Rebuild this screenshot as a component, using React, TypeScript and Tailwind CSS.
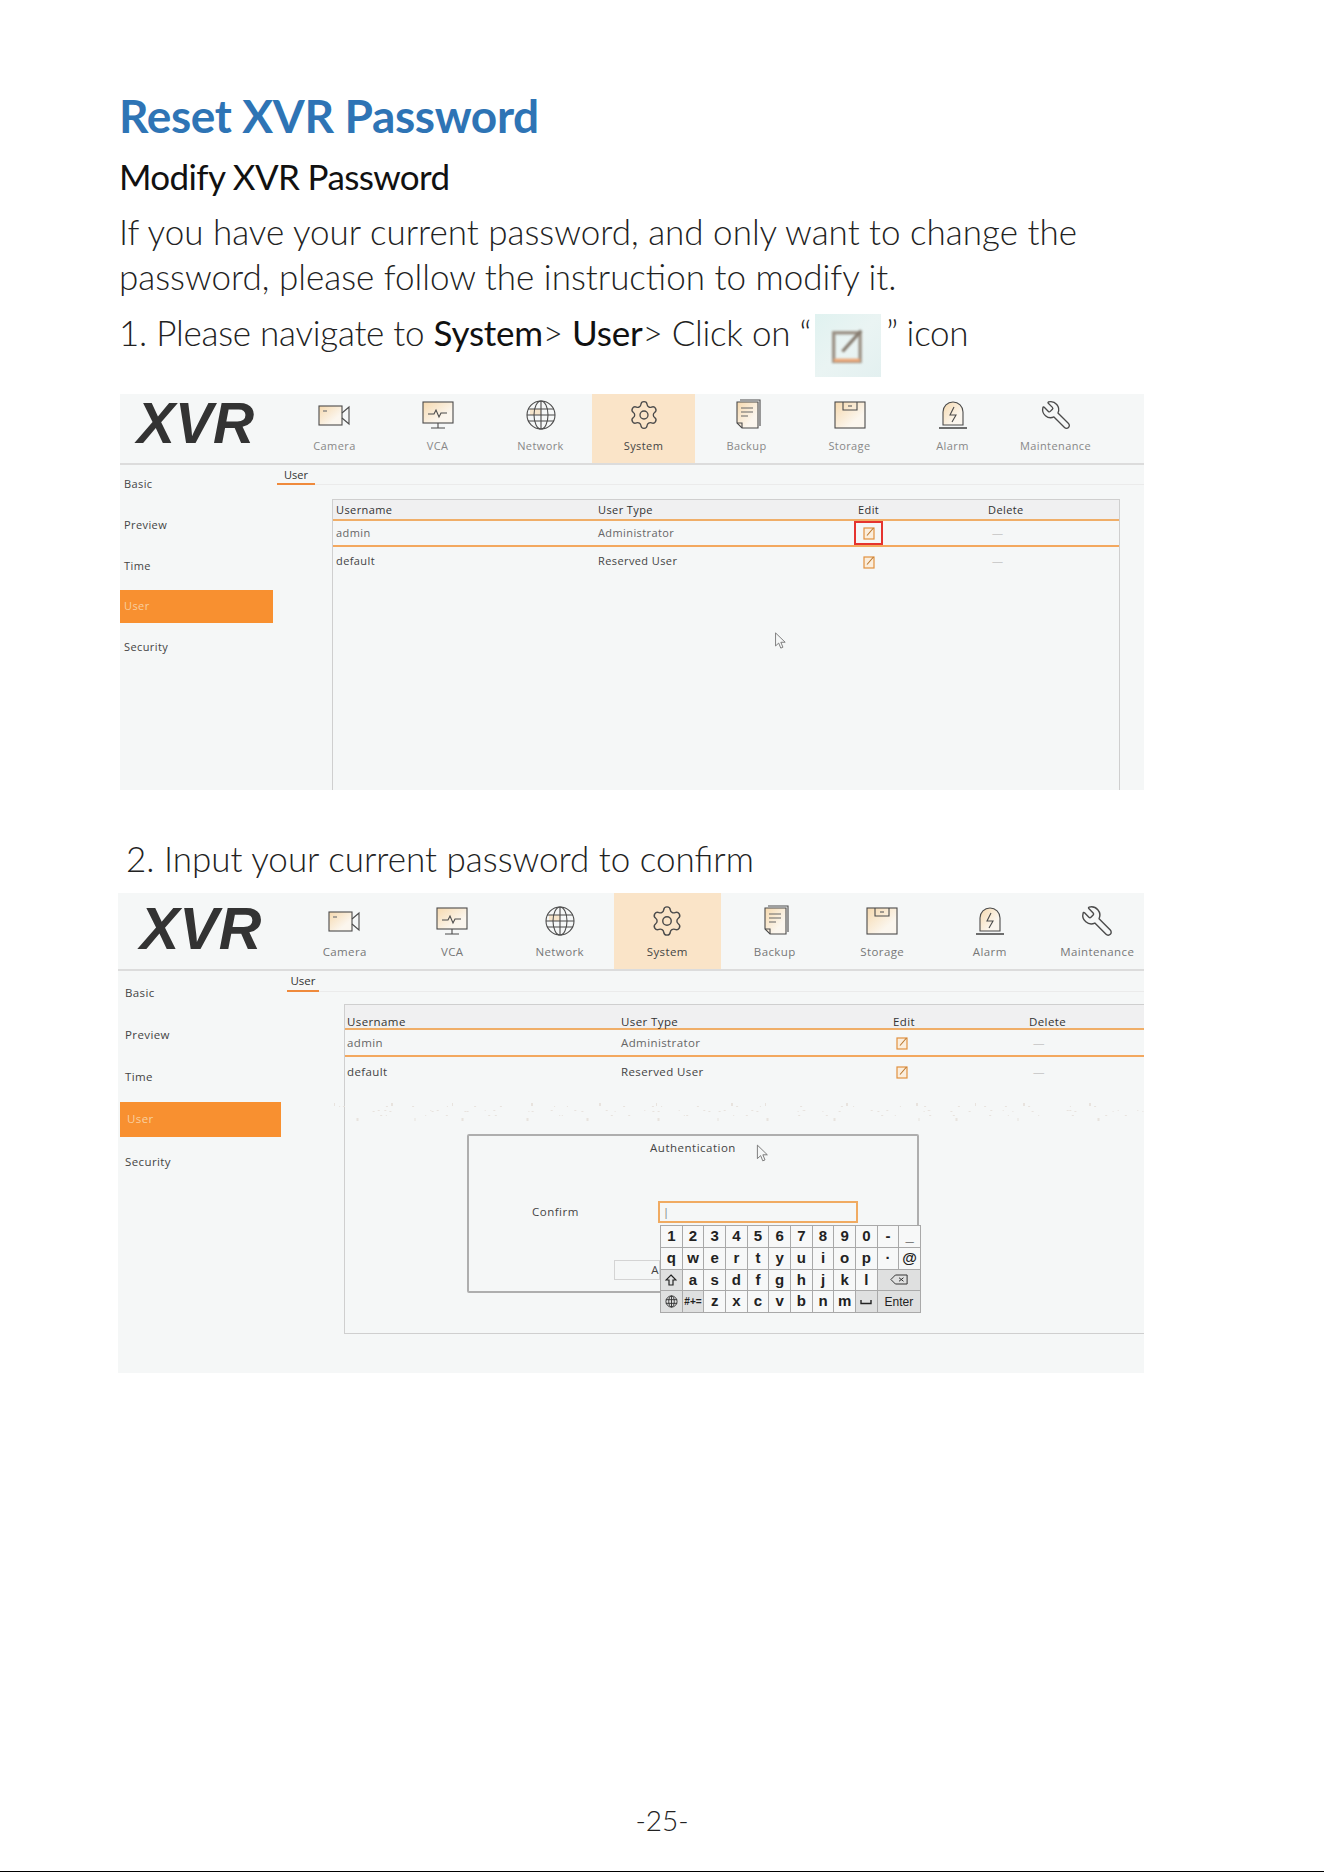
import React from "react";
import { Settings, Wrench } from "lucide-react";

const Grad = () => (
  <svg width="0" height="0" className="absolute">
    <defs>
      <linearGradient id="cream" x1="0" y1="0" x2="1" y2="1">
        <stop offset="0" stopColor="#f6d9ae" />
        <stop offset="0.7" stopColor="#fbf6ee" />
      </linearGradient>
    </defs>
  </svg>
);

const S = { fill: "none", stroke: "#4b4b4b", strokeWidth: 1.1 };

const IconCamera = ({ c }: { c: string }) => (
  <svg viewBox="0 0 36 32" className={c}>
    <rect x="2" y="7" width="23" height="19" fill="url(#cream)" stroke="#4b4b4b" strokeWidth="1.1" />
    <path d="M25 14l7-6v17l-7-6" {...S} />
    <path d="M6 12h4" stroke="#777" strokeWidth="1.2" />
  </svg>
);
const IconVca = ({ c }: { c: string }) => (
  <svg viewBox="0 0 36 32" className={c}>
    <rect x="3" y="3" width="30" height="21" fill="url(#cream)" stroke="#4b4b4b" strokeWidth="1.1" />
    <path d="M8 15h6l2-4 3 7 2-4h6" {...S} />
    <path d="M18 24v5M11 29h14" {...S} />
  </svg>
);
const IconGlobe = ({ c }: { c: string }) => (
  <svg viewBox="0 0 36 32" className={c}>
    <rect x="7" y="10" width="11" height="6" fill="#f6d9ae" opacity="0.6" />
    <circle cx="18" cy="16" r="14" {...S} />
    <ellipse cx="18" cy="16" rx="7" ry="14" {...S} />
    <path d="M18 2v28M5 10h26M5 22h26M4 16h28" {...S} />
  </svg>
);
const IconBackup = ({ c }: { c: string }) => (
  <svg viewBox="0 0 36 32" className={c}>
    <path d="M11 1h20v26" {...S} />
    <path d="M8 3h21v26H13l-5-5z" fill="url(#cream)" stroke="#4b4b4b" strokeWidth="1.1" />
    <path d="M8 24h5v5" {...S} />
    <path d="M12 9h12M12 13h12M12 17h7" stroke="#666" strokeWidth="1.1" />
  </svg>
);
const IconStorage = ({ c }: { c: string }) => (
  <svg viewBox="0 0 36 32" className={c}>
    <rect x="3" y="3" width="30" height="26" fill="url(#cream)" stroke="#4b4b4b" strokeWidth="1.1" />
    <path d="M11 3v8h14V3" {...S} />
    <path d="M16 7h4" stroke="#666" strokeWidth="1.2" />
  </svg>
);
const IconAlarm = ({ c }: { c: string }) => (
  <svg viewBox="0 0 36 32" className={c}>
    <path d="M8 26V13a10 10 0 0 1 20 0v13z" fill="url(#cream)" stroke="#4b4b4b" strokeWidth="1.1" />
    <path d="M19 8l-4 8h6l-4 7" {...S} />
    <path d="M4 29h28" stroke="#4b4b4b" strokeWidth="1.6" />
  </svg>
);
const IconEdit = ({ c }: { c: string }) => (
  <svg viewBox="0 0 14 14" className={c}>
    <rect x="2" y="2" width="10" height="11" fill="#fbeedd" stroke="#e2913f" strokeWidth="1.2" />
    <path d="M5 9.5L11.5 2" stroke="#b9772f" strokeWidth="1.1" />
  </svg>
);
const Pointer = ({ c }: { c: string }) => (
  <svg viewBox="0 0 14 20" className={c}>
    <path d="M1.5 1v14.5l3.5-3.2 2.3 5.6 2.4-1-2.3-5.5h4.8z" fill="#f5f7f7" stroke="#666" strokeWidth="0.9" />
  </svg>
);

const speckles: [number, number][] = Array.from({ length: 130 }, (_, i) => [
  (i * 37.3 + ((i * i * 13) % 29)) % 810,
  (i * i * 7) % 20,
]);

const Speckle = () => (
  <svg viewBox="0 0 810 22" className="absolute left-[216px] top-[210px] w-[810px] h-[22px]">
    {speckles.map(([x, y], i) => (
      <rect key={i} x={x} y={y} width={i % 3 === 0 ? 1 : 2} height={i % 5 === 0 ? 3 : 1} fill="#e8e3de" />
    ))}
  </svg>
);

const tabs: [string, (p: { c: string }) => React.ReactElement][] = [
  ["Camera", IconCamera],
  ["VCA", IconVca],
  ["Network", IconGlobe],
  ["System", ({ c }) => <Settings className={c} strokeWidth={1} color="#4b4b4b" />],
  ["Backup", IconBackup],
  ["Storage", IconStorage],
  ["Alarm", IconAlarm],
  ["Maintenance", ({ c }) => <Wrench className={`${c} -scale-x-100`} strokeWidth={1} color="#4b4b4b" />],
];

const sideItems = ["Basic", "Preview", "Time", "User", "Security"];

const keys: [string, string][] = [
  ..."1234567890-_".split("").map((k) => [k, ""] as [string, string]),
  ..."qwertyuiop·@".split("").map((k) => [k, ""] as [string, string]),
];

const Key = ({ k, gray, wide, small }: { k: React.ReactNode; gray?: boolean; wide?: boolean; small?: boolean }) => (
  <div
    className={`flex items-center justify-center border-r border-b border-[#a9a9a9] ${wide ? "col-span-2" : ""} ${gray ? "bg-[#dfe0e0]" : "bg-[#f7f8f8]"} ${small ? "text-[10px] font-normal" : "text-[15px] font-bold"} text-[#222]`}
  >
    {k}
  </div>
);

const Keyboard = () => (
  <div className="absolute left-[542px] top-[332px] w-[261px] h-[88px] grid grid-cols-12 grid-rows-4 border-l border-t border-[#a9a9a9] font-['Liberation_Sans',sans-serif]">
    {keys.map(([k]) => (
      <Key key={k} k={k} />
    ))}
    <Key gray k={<svg viewBox="0 0 12 12" className="w-[12px] h-[12px]"><path d="M6 1l5 5H8v5H4V6H1z" fill="none" stroke="#222" strokeWidth="1.2" /></svg>} />
    {"asdfghjkl".split("").map((k) => (
      <Key key={k} k={k} />
    ))}
    <Key gray wide k={<svg viewBox="0 0 20 12" className="w-[18px] h-[11px]"><path d="M6 1h13v10H6L1 6z M10 4l5 4M15 4l-5 4" fill="none" stroke="#333" strokeWidth="1.1" /></svg>} />
    <Key gray k={<svg viewBox="0 0 14 14" className="w-[13px] h-[13px]"><circle cx="7" cy="7" r="6" fill="none" stroke="#333" /><ellipse cx="7" cy="7" rx="3" ry="6" fill="none" stroke="#333" /><path d="M1 5h12M1 9h12M7 1v12" stroke="#333" /></svg>} />
    <Key gray small k={<span className="font-bold">#+=</span>} />
    {"zxcvbnm".split("").map((k) => (
      <Key key={k} k={k} />
    ))}
    <Key gray k={<svg viewBox="0 0 12 6" className="w-[12px] h-[6px]"><path d="M1 1v3.5h10V1" fill="none" stroke="#222" strokeWidth="1.4" /></svg>} />
    <Key gray wide small k={<span className="text-[12px]">Enter</span>} />
  </div>
);

const Table = ({
  grid,
  head,
  row,
  row2,
  text,
  box,
  iconC,
  marker,
}: {
  grid: string;
  head: string;
  row: string;
  row2: string;
  text: string;
  box?: boolean;
  iconC: string;
  marker: string;
}) => (
  <>
    <div className={`${head} ${grid} items-center bg-[#f0f0f1] ${text} text-[#333] border-b-2 border-[#f0ae68]`}>
      <span>Username</span>
      <span>User Type</span>
      <span>Edit</span>
      <span>Delete</span>
    </div>
    <div className={`${row} ${grid} items-center ${text} text-[#666] border-b-2 border-[#f3a85f]`}>
      <span>admin</span>
      <span>Administrator</span>
      <span className={`${marker} h-full flex items-center justify-center ${box ? "border-2 border-[#e5342f]" : ""}`}>
        <IconEdit c={iconC} />
      </span>
      <span className="text-[#ccc] pl-[4px]">—</span>
    </div>
    <div className={`${row2} ${grid} items-center ${text} text-[#444]`}>
      <span>default</span>
      <span>Reserved User</span>
      <span className={`${marker} h-full flex items-center justify-center`}>
        <IconEdit c={iconC} />
      </span>
      <span className="text-[#ccc] pl-[4px]">—</span>
    </div>
  </>
);

const Shot1 = () => (
  <div className="relative ml-[120px] mt-[17px] w-[1024px] h-[396px] bg-[#f5f7f7] flex flex-col font-['Open_Sans',sans-serif]">
    <div className="h-[71px] flex border-b-2 border-[#dcdcdc] shrink-0">
      <div className="w-[163px] pl-[17px] pb-[10px] flex items-center font-['Liberation_Sans',sans-serif] font-bold italic text-[57px] leading-[59px] text-[#333]">
        XVR
      </div>
      {tabs.map(([name, Icon]) => (
        <div key={name} className={`w-[103px] shrink-0 h-[69px] flex flex-col items-center pt-[5px] ${name === "System" ? "bg-[#fae4c8] text-[#444]" : "text-[#888]"}`}>
          <Icon c="w-[36px] h-[32px]" />
          <span className="text-[11px] mt-[7px] leading-[16px] tracking-[0.4px]">{name}</span>
        </div>
      ))}
    </div>
    <div className="flex flex-1 min-h-0">
      <div className="w-[153px] pt-[3px] flex flex-col gap-[7.7px] text-[11px] tracking-[0.4px] text-[#444] shrink-0">
        {sideItems.map((s) => (
          <div key={s} className={`h-[33px] flex items-center pl-[4px] ${s === "User" ? "bg-[#f89030] text-[#f9cf9f]" : ""}`}>{s}</div>
        ))}
      </div>
      <div className="flex-1 pl-[4px] flex flex-col">
        <div className="h-[20px] border-b border-[#ebebeb]">
          <div className="w-[38px] h-[20px] border-b-2 border-[#ef8a3c] text-center text-[11px] leading-[20px] text-[#333]">User</div>
        </div>
        <div className="ml-[55px] mr-[24px] mt-[14px] flex-1 border-x border-t border-[#cfcfcf]">
          <Table
            grid="grid grid-cols-[262px_260px_130px_1fr] pl-[3px]"
            head="h-[21px] pt-[2px]"
            row="h-[26px]"
            row2="h-[29px]"
            text="text-[11px] tracking-[0.4px]"
            box
            iconC="w-[14px] h-[14px]"
            marker="w-[29px] -ml-[4px]"
          />
        </div>
      </div>
    </div>
    <Pointer c="absolute left-[654px] top-[238px] w-[13px] h-[18px]" />
  </div>
);

const Shot2 = () => (
  <div className="relative ml-[118px] mt-[16px] w-[1026px] h-[480px] bg-[#f5f7f7] flex flex-col font-['Open_Sans',sans-serif] overflow-hidden">
    <div className="h-[78px] flex border-b-2 border-[#dcdcdc] shrink-0">
      <div className="w-[173px] shrink-0 pl-[22px] pb-[4px] flex items-center font-['Liberation_Sans',sans-serif] font-bold italic text-[59px] leading-[61px] text-[#333]">
        XVR
      </div>
      {tabs.map(([name, Icon]) => (
        <div key={name} className={`w-[107.5px] shrink-0 h-[76px] flex flex-col items-center pt-[11px] ${name === "System" ? "bg-[#fae4c8] text-[#444]" : "text-[#777]"}`}>
          <Icon c="w-[36px] h-[34px]" />
          <span className="text-[11.5px] mt-[6px] leading-[16px] tracking-[0.4px]">{name}</span>
        </div>
      ))}
    </div>
    <div className="flex flex-1">
      <div className="w-[163px] pt-[4px] flex flex-col gap-[7.2px] text-[11.5px] tracking-[0.4px] text-[#444] shrink-0">
        {sideItems.map((s) => (
          <div key={s} className={`h-[35px] flex items-center pl-[7px] ${s === "User" ? "bg-[#f89030] ml-[2px] pl-[5px] text-[#f9cf9f]" : ""}`}>{s}</div>
        ))}
      </div>
      <div className="flex-1 pl-[6px] flex flex-col">
        <div className="h-[21px] border-b border-[#ebebeb]">
          <div className="w-[32px] h-[21px] border-b-2 border-[#ef8a3c] text-center text-[11.5px] leading-[20px] text-[#333]">User</div>
        </div>
        <div className="ml-[57px] mt-[12px] h-[330px] border-l border-t border-b border-[#cfcfcf]">
          <Table
            grid="grid grid-cols-[274px_272px_136px_1fr] pl-[2px]"
            head="h-[25px] pt-[8px]"
            row="h-[27px]"
            row2="h-[29px]"
            text="text-[11.5px] tracking-[0.4px]"
            iconC="w-[14px] h-[14px]"
            marker="w-[18px]"
          />
        </div>
      </div>
    </div>
    <Speckle />
    <div className="absolute left-[349px] top-[241px] w-[452px] h-[159px] border-2 border-[#aeaeae] rounded-[2px] bg-[#f5f7f7] flex flex-col text-[#444] text-[11.5px] tracking-[0.5px]">
      <div className="text-center pt-[3px] leading-[18px]">Authentication</div>
      <div className="flex items-center mt-[44px] pl-[63px]">
        <span className="w-[126px]">Confirm</span>
        <div className="w-[200px] h-[22px] border-2 border-[#f0ab62] flex items-center pl-[3px] text-[#777] text-[11px]">|</div>
      </div>
      <div className="mt-[37px] ml-[145px] w-[46px] h-[20px] border border-[#d4d4d4] text-[11.5px] leading-[18px] text-right">A</div>
    </div>
    <Keyboard />
    <Pointer c="absolute left-[638px] top-[251px] w-[13px] h-[19px]" />
  </div>
);

export default function App() {
  return (
    <div className="w-[1324px] h-[1872px] bg-white flex flex-col font-['Lato',sans-serif] text-[#222] overflow-hidden">
      <Grad />
      <div className="pt-[92px] pl-[119px]">
        <h1 className="text-[46px] leading-[48px] font-bold text-[#2e74b5] tracking-[-0.35px]">Reset XVR Password</h1>
        <h2 className="mt-[16px] text-[35px] leading-[40px] font-normal tracking-[-0.63px] text-[#111]">Modify XVR Password</h2>
        <p className="mt-[13px] text-[35px] leading-[45px] font-light whitespace-nowrap">
          If you have your current password, and only want to change the
          <br />
          password, please follow the instruction to modify it.
        </p>
        <div className="mt-[14px] h-[64px] flex items-start text-[35px] leading-[38px] font-light tracking-[-0.25px] whitespace-nowrap">
          <span>
            1. Please navigate to <span className="font-normal text-[#111]">System</span>&gt; <span className="font-normal text-[#111]">User</span>&gt; Click on “
          </span>
          <div className="ml-[4px] mt-[1px] w-[66px] h-[63px] bg-gradient-to-br from-[#e0f2f0] via-[#eaf4f3] to-[#e3f0f0] flex items-center justify-center shrink-0">
            <svg viewBox="0 0 40 40" className="w-[44px] h-[44px] blur-[1px]">
              <rect x="7" y="8" width="24" height="26" fill="none" stroke="#9a9084" strokeWidth="3" />
              <path d="M7 33h24" stroke="#eca777" strokeWidth="3" />
              <path d="M15 25L32 6" stroke="#857b6f" strokeWidth="3" />
            </svg>
          </div>
          <span className="ml-[5px]">” icon</span>
        </div>
      </div>
      <Shot1 />
      <div className="mt-[50px] pl-[126px] text-[35px] leading-[37px] font-light">2. Input your current password to confirm</div>
      <Shot2 />
      <div className="mt-auto text-center text-[28px] leading-[36px] font-light">-25-</div>
      <div className="mt-[33px] h-[1px] bg-black shrink-0" />
    </div>
  );
}
